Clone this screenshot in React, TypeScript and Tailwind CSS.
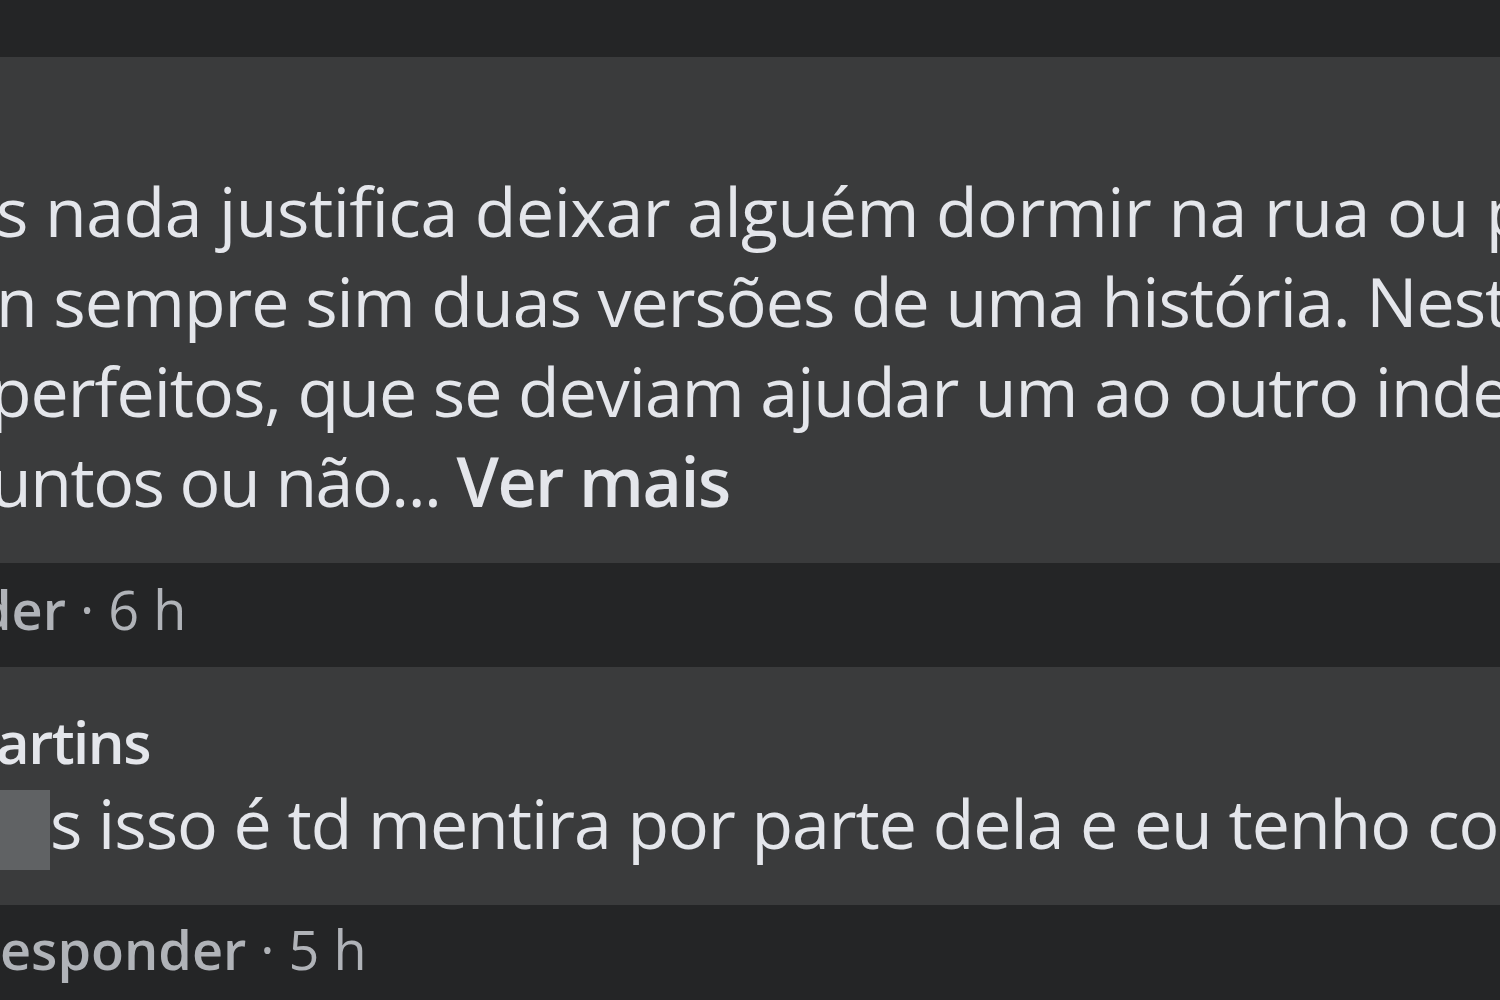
export default function App() {
  return (
    <div
      className="w-[1500px] h-[1000px] overflow-hidden bg-[#242526] text-[#e4e6eb]"
      style={{ fontFamily: '"Open Sans", "Noto Sans", sans-serif' }}
    >
      {/* top strip */}
      <div className="h-[57px]" />

      {/* first comment bubble */}
      <div className="h-[506px] bg-[#3a3b3c] pt-[109px] text-[68px] leading-[90px] tracking-[-1px] whitespace-nowrap">
        <div className="-ml-[4px] tracking-[-0.5px]">s nada justifica deixar alguém dormir na rua ou passar fome.</div>
        <div className="-ml-[4px]">n sempre sim duas versões de uma história. Neste caso</div>
        <div className="-ml-[10px]">perfeitos, que se deviam ajudar um ao outro independentemente</div>
        <div className="-ml-[10px] tracking-[-1.5px]">
          untos ou não... <span className="font-semibold">Ver mais</span>
        </div>
      </div>

      {/* footer 1 */}
      <div className="h-[104px] pt-[10px] text-[54px] leading-[72px] text-[#b0b3b8] whitespace-nowrap -ml-[22px]">
        <span className="font-semibold">der</span> · 6 h
      </div>

      {/* second comment bubble */}
      <div className="h-[238px] bg-[#3a3b3c] pt-[40px] whitespace-nowrap">
        <div className="text-[58px] leading-[69px] font-semibold tracking-[-1.5px] -ml-[4px]">artins</div>
        <div className="flex items-center text-[68px] leading-[90px] tracking-[-1px]">
          <span className="inline-block shrink-0 w-[50px] h-[80px] bg-[#606264] mt-[14px]" />
          <span>s isso é td mentira por parte dela e eu tenho como provar</span>
        </div>
      </div>

      {/* footer 2 */}
      <div className="h-[95px] pt-[8px] text-[54px] leading-[72px] text-[#b0b3b8] whitespace-nowrap">
        <span className="font-semibold">esponder</span> · 5 h
      </div>
    </div>
  );
}
